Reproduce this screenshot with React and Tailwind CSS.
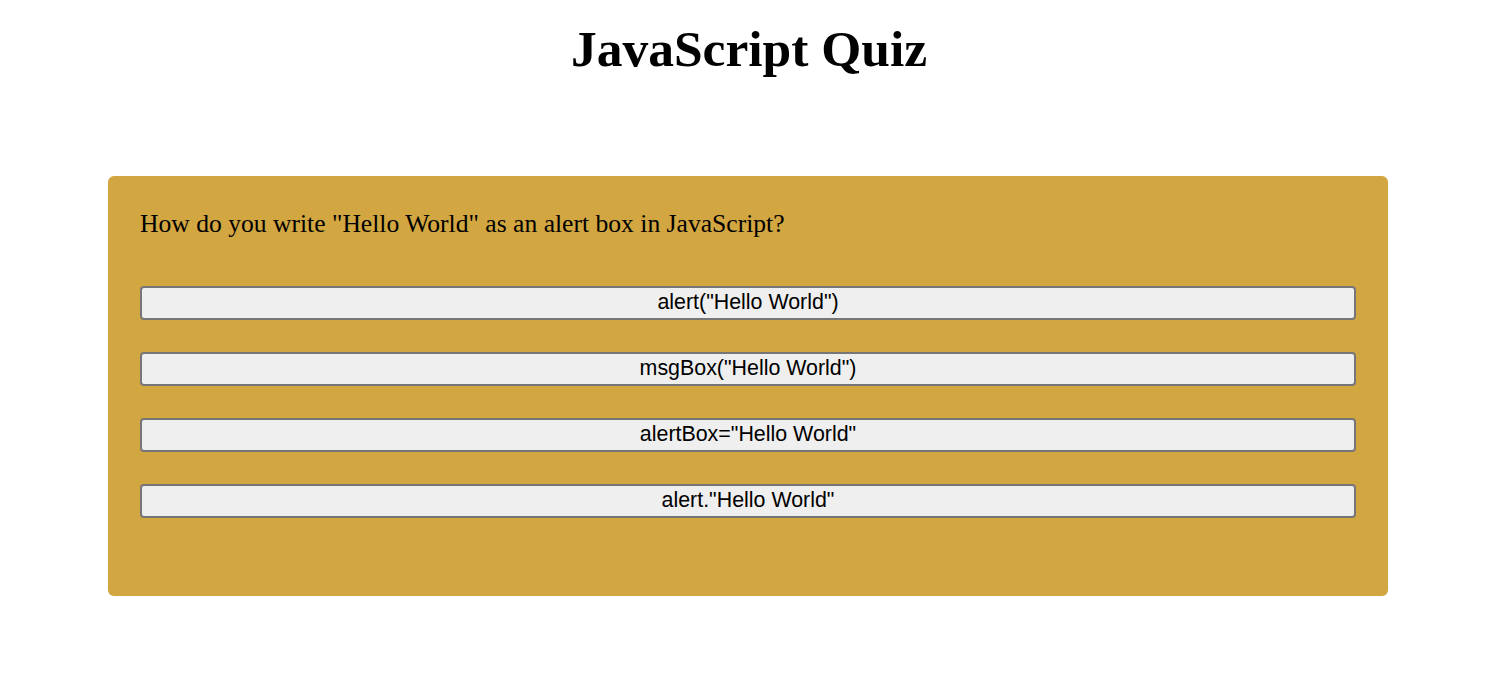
const options = [
  'alert("Hello World")',
  'msgBox("Hello World")',
  'alertBox="Hello World"',
  'alert."Hello World"',
];

export default function App() {
  return (
    <div className="min-h-screen bg-white font-['Liberation_Serif',serif] text-black">
      <h1 className="text-center text-[51.5px] font-bold leading-none pt-[23px]">JavaScript Quiz</h1>
      <div className="ml-[108px] mt-[101.5px] h-[420px] w-[1280px] rounded-[6px] bg-[#d2a641] px-[32px] pt-[33px]">
        <p className="text-[25.6px] leading-[30px]">How do you write "Hello World" as an alert box in JavaScript?</p>
        <div className="mt-[47px] flex flex-col gap-[32px]">
          {options.map((o) => (
            <button
              key={o}
              className="h-[34px] w-full rounded-[4px] border-2 border-[#767676] bg-[#efefef] font-['Liberation_Sans',sans-serif] text-[21.4px] leading-none"
            >
              {o}
            </button>
          ))}
        </div>
      </div>
    </div>
  );
}
